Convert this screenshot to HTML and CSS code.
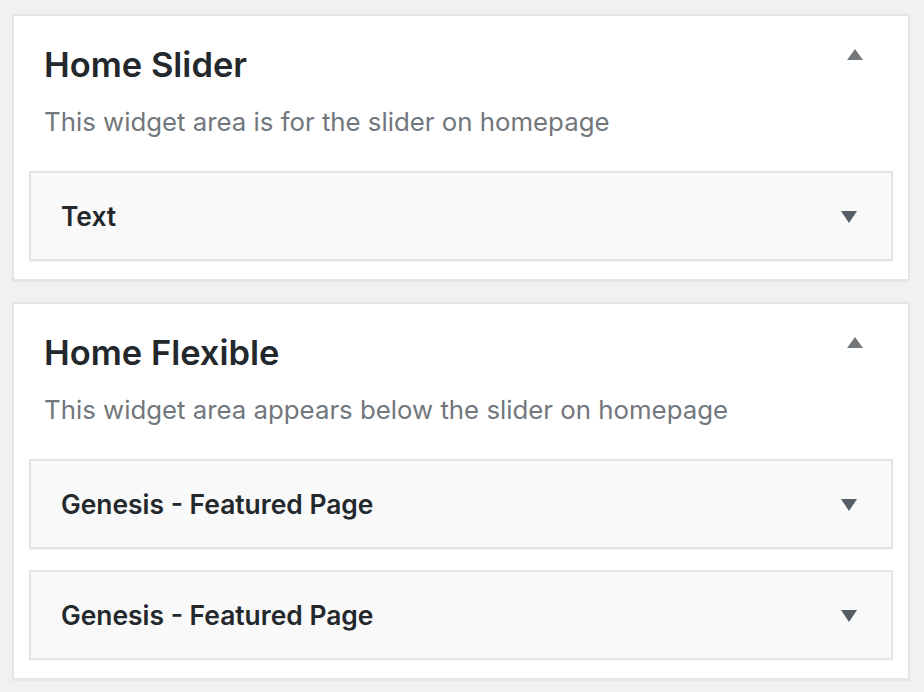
FILE: index.html
```html
<!DOCTYPE html>
<html>
<head>
<meta charset="utf-8">
<link rel="stylesheet" href="styles.css">
</head>
<body>
<div class="page">
  <section class="area">
    <div class="area-head">
      <h2 class="area-title">Home Slider</h2>
      <svg class="arrow-up" width="16" height="11" viewBox="0 0 16 11"><polygon points="8,0 16,11 0,11" fill="#72777c"/></svg>
    </div>
    <p class="area-desc">This widget area is for the slider on homepage</p>
    <div class="widget">
      <span class="widget-title">Text</span>
      <svg class="arrow-down" width="16" height="12" viewBox="0 0 16 12"><polygon points="0,0 16,0 8,12" fill="#555d66"/></svg>
    </div>
  </section>
  <section class="area">
    <div class="area-head">
      <h2 class="area-title">Home Flexible</h2>
      <svg class="arrow-up" width="16" height="11" viewBox="0 0 16 11"><polygon points="8,0 16,11 0,11" fill="#72777c"/></svg>
    </div>
    <p class="area-desc">This widget area appears below the slider on homepage</p>
    <div class="widget">
      <span class="widget-title">Genesis - Featured Page</span>
      <svg class="arrow-down" width="16" height="12" viewBox="0 0 16 12"><polygon points="0,0 16,0 8,12" fill="#555d66"/></svg>
    </div>
    <div class="widget">
      <span class="widget-title">Genesis - Featured Page</span>
      <svg class="arrow-down" width="16" height="12" viewBox="0 0 16 12"><polygon points="0,0 16,0 8,12" fill="#555d66"/></svg>
    </div>
  </section>
</div>
</body>
</html>
```
FILE: styles.css
```css
html, body {
  margin: 0;
  padding: 0;
  background: #f1f1f1;
}
body {
  font-family: Inter, "Noto Sans", "Liberation Sans", sans-serif;
  width: 924px;
  height: 692px;
  overflow: hidden;
}
.page {
  padding: 14px 0 0 12px;
  display: flex;
  flex-direction: column;
  gap: 21px;
}
.area {
  background: #fff;
  border: 2px solid #e5e5e5;
  box-shadow: 0 1px 1px rgba(0,0,0,0.04);
  padding: 28px 15px 18px 15px;
  width: 864px;
}
.area-head {
  display: flex;
  justify-content: space-between;
  align-items: flex-start;
  padding-left: 15px;
  padding-right: 30px;
}
.area-title {
  margin: 0;
  font-size: 34.5px;
  line-height: 41px;
  font-weight: 600;
  color: #23282d;
}
.arrow-up {
  display: block;
  margin-top: 5px;
}
.area-desc {
  margin: 22px 0 34px 15px;
  font-size: 25.8px;
  line-height: 30px;
  color: #72777c;
}
.widget {
  height: 86px;
  background: #f9f9f9;
  border: 2px solid #e5e5e5;
  box-shadow: 0 1px 1px rgba(0,0,0,0.04);
  display: flex;
  align-items: center;
  justify-content: space-between;
  padding: 0 34px 0 30px;
}
.widget + .widget {
  margin-top: 21px;
}
.widget-title {
  font-size: 26.4px;
  font-weight: 600;
  color: #23282d;
  line-height: 30px;
}
.arrow-down {
  display: block;
  margin-top: 1px;
}
```
